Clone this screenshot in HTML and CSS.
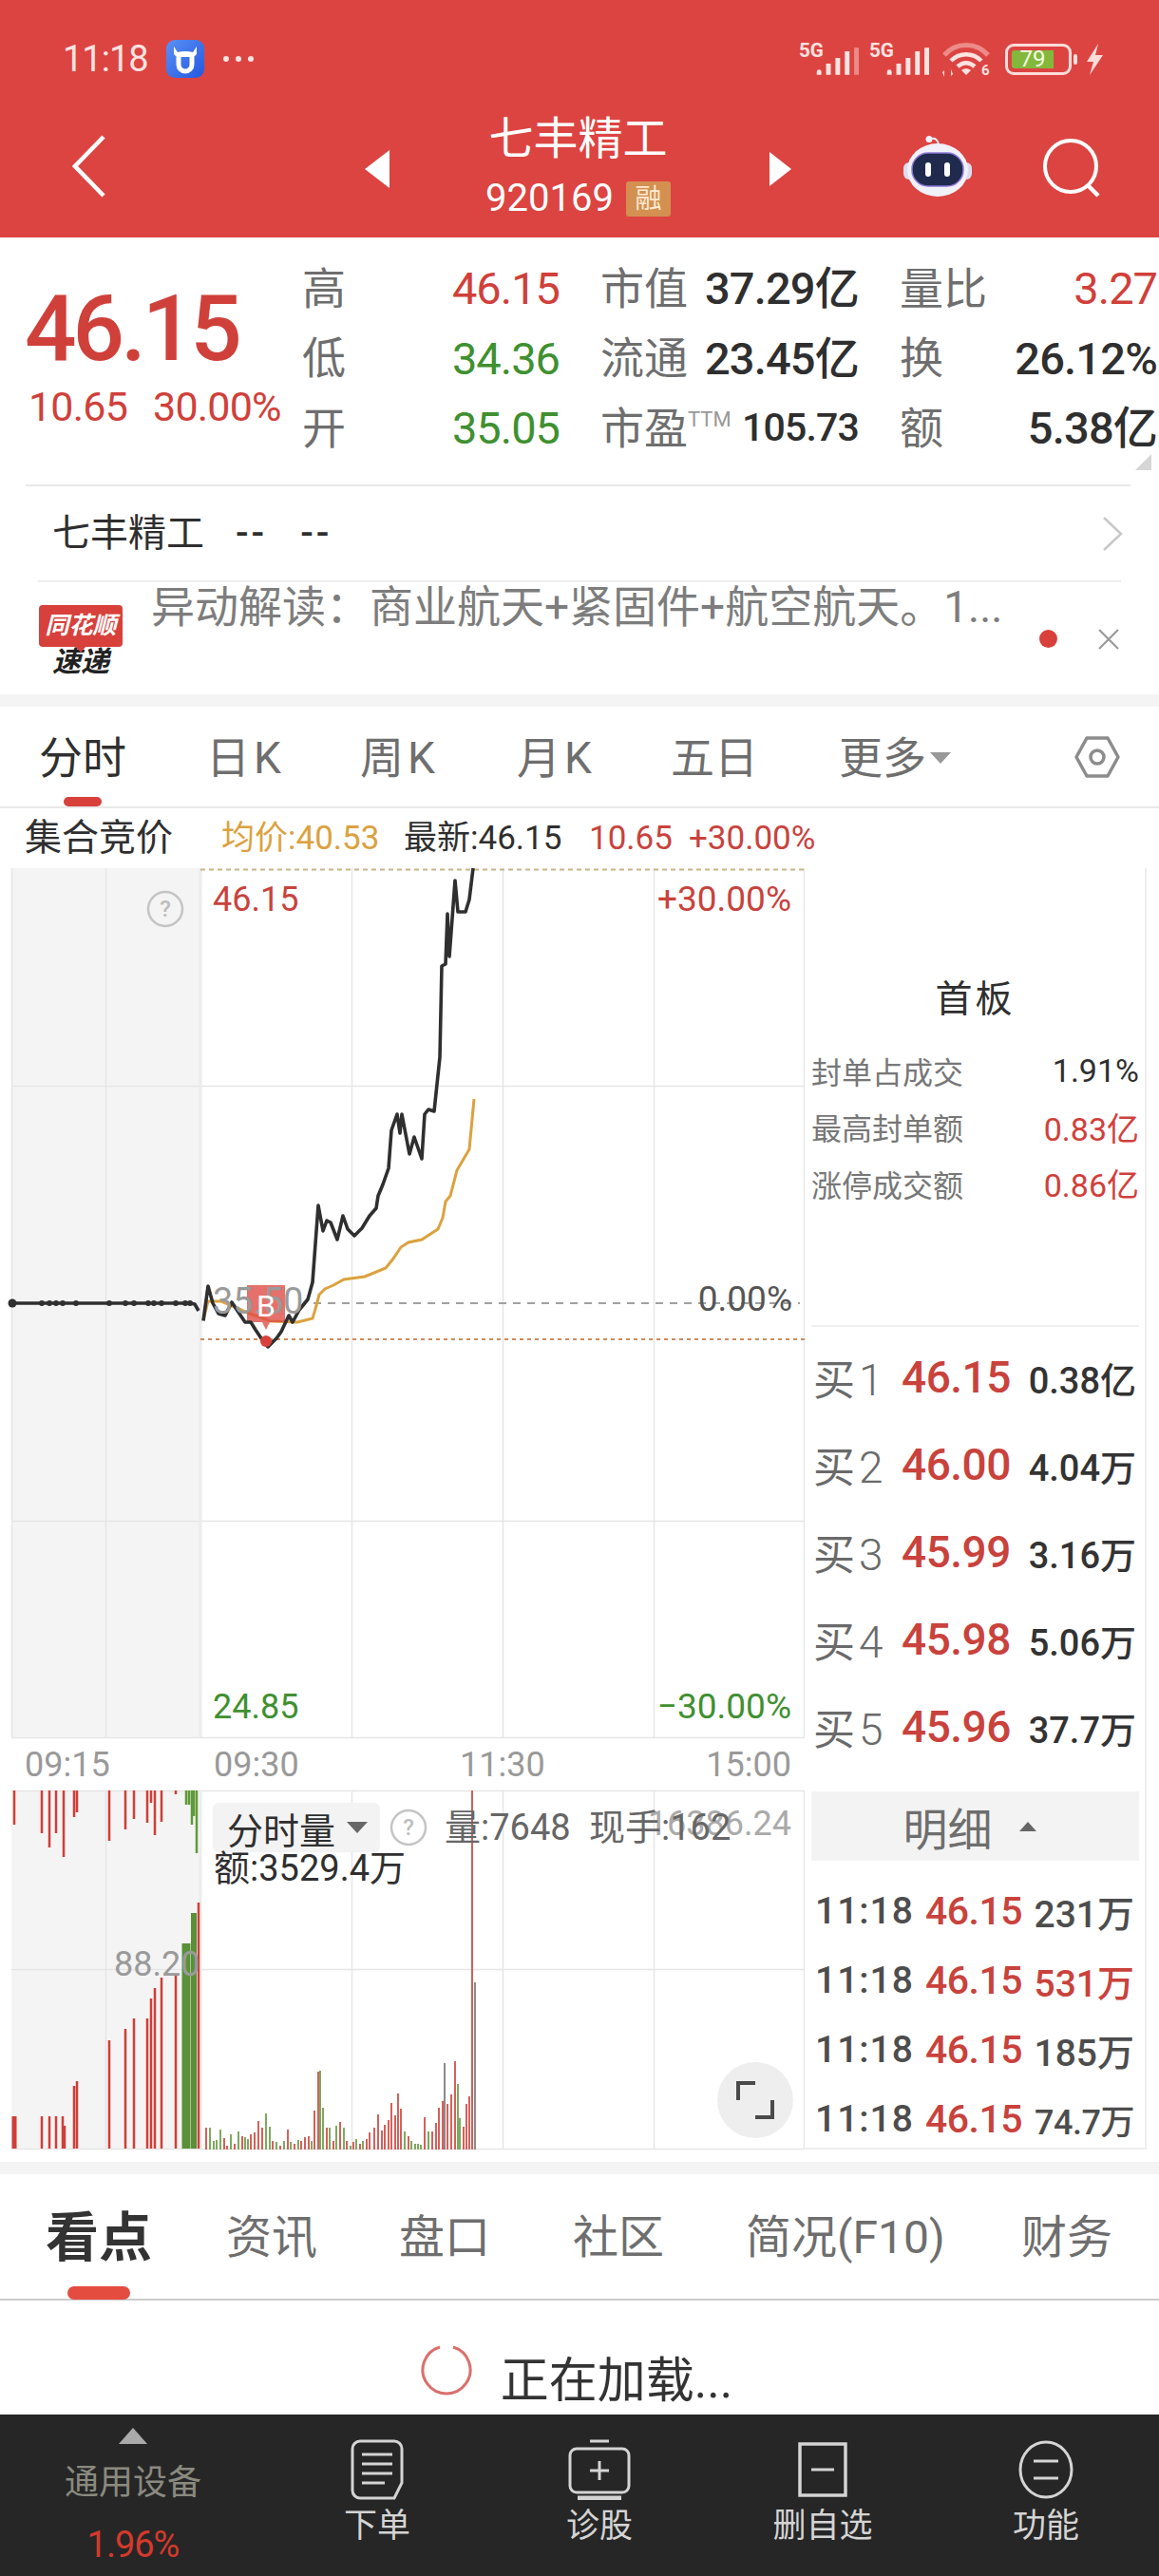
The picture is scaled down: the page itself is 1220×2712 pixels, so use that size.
FILE: index.html
```html
<!DOCTYPE html>
<html lang="zh-CN">
<head>
<meta charset="utf-8">
<title>七丰精工</title>
<link rel="stylesheet" href="styles.css">
</head>
<body>
<div class="page">

  <header class="top">
    <div class="status">
      <span class="clock">11:18</span>
      <svg class="app-icon" viewBox="0 0 40 40">
        <defs><linearGradient id="appBlue" x1="0" y1="0" x2="1" y2="1"><stop offset="0" stop-color="#5a90f5"/><stop offset="1" stop-color="#2458e0"/></linearGradient></defs>
        <rect width="40" height="40" rx="9" fill="url(#appBlue)"/>
        <path d="M8 7l4 6c5-1.500 11-1.500 16 0l4-6 0 8-2 2-3 1h-14l-3-1-2-2z" fill="#fff"/>
        <path d="M13 16v10a7 7 0 0 0 14 0V16" fill="none" stroke="#fff" stroke-width="5"/>
      </svg>
      <span class="more-dots"><i></i><i></i><i></i></span>
      <span class="status-right">
        <svg class="sig" viewBox="0 0 65 36">
          <text x="0" y="16" class="sig-label">5G</text>
          <path d="M19 35v-3a2.500 2.500 0 0 1 5 0v3zM29 35V23h5v12zM39 35V17h5v18zM49 35V10h5v25z" fill="#ffe3e1"/>
          <path d="M59 35V6h5v29z" fill="#ffe3e1" opacity=".45"/>
        </svg>
        <svg class="sig" viewBox="0 0 65 36">
          <text x="0" y="16" class="sig-label">5G</text>
          <path d="M19 35v-3a2.500 2.500 0 0 1 5 0v3zM29 35V23h5v12zM39 35V17h5v18zM49 35V10h5v25zM59 35V6h5v29z" fill="#ffe3e1"/>
        </svg>
        <svg class="wifi" viewBox="0 0 52 38">
          <path d="M2 15C14 1 36 1 48 15" fill="none" stroke="#ffe3e1" stroke-width="5" opacity=".45"/>
          <path d="M9 21c9-9 23-9 32 0M16 27c6-5 12-5 18 0" fill="none" stroke="#ffe3e1" stroke-width="4.500"/>
          <path d="M20 31c3-2.500 7-2.500 10 0l-5 5z" fill="#ffe3e1"/>
          <path d="M2 38v-7l-2 2zM9 30v7l2-2z" fill="#ffe3e1"/>
          <text x="41" y="36" class="wifi-six">6</text>
        </svg>
        <span class="battery"><span class="battery-fill">79</span></span>
        <i class="battery-nub"></i>
        <svg class="bolt" viewBox="0 0 20 33"><path d="M14 0L2 19h7l-4 14L19 12h-8z" fill="#ffdcda"/></svg>
      </span>
    </div>
    <nav class="nav">
      <svg class="back" viewBox="0 0 36 66"><path d="M33 2L3 33l30 31" fill="none" stroke="#fff" stroke-width="4.500"/></svg>
      <i class="tri-left"></i>
      <div class="title">
        <div class="title-name">七丰精工</div>
        <div class="title-code">920169<span class="rong">融</span></div>
      </div>
      <i class="tri-right"></i>
      <svg class="robot" viewBox="0 0 72 64">
        <path d="M37 9c-1-5-4-7-7-6" fill="none" stroke="#eef" stroke-width="2"/>
        <circle cx="27" cy="3.500" r="3.500" fill="#f2f2fa"/>
        <rect x="0" y="28" width="72" height="18" rx="6" fill="#dcdcf0"/>
        <ellipse cx="36" cy="36" rx="32" ry="28" fill="#f1f1fa"/>
        <rect x="9" y="18" width="54" height="35" rx="17" fill="#1f2a4c" stroke="#8a78d8" stroke-width="1.500"/>
        <rect x="23" y="28" width="6" height="15" rx="3" fill="#fff"/>
        <rect x="43" y="28" width="6" height="15" rx="3" fill="#fff"/>
      </svg>
      <svg class="search" viewBox="0 0 62 62"><circle cx="29" cy="29" r="27" fill="none" stroke="#fff" stroke-width="4"/><path d="M47 49l11 11" stroke="#fff" stroke-width="4.500"/></svg>
    </nav>
  </header>

  <section class="quote">
    <div class="price-block">
      <div class="price">46.15</div>
      <div class="change"><span>10.65</span><span>30.00%</span></div>
    </div>
    <div class="stats">
      <div class="stat"><span class="k">高</span><span class="v up">46.15</span></div>
      <div class="stat"><span class="k">市值</span><span class="v strong">37.29亿</span></div>
      <div class="stat"><span class="k">量比</span><span class="v up">3.27</span></div>
      <div class="stat"><span class="k">低</span><span class="v down">34.36</span></div>
      <div class="stat"><span class="k">流通</span><span class="v strong">23.45亿</span></div>
      <div class="stat"><span class="k">换</span><span class="v strong">26.12%</span></div>
      <div class="stat"><span class="k">开</span><span class="v down">35.05</span></div>
      <div class="stat"><span class="k">市盈<sup class="ttm">TTM</sup></span><span class="v strong small">105.73</span></div>
      <div class="stat"><span class="k">额</span><span class="v strong">5.38亿</span></div>
    </div>
    <i class="corner"></i>
  </section>

  <section class="name-row">
    <span class="name-label">七丰精工</span>
    <span class="name-dash">-- --</span>
    <svg class="chev" viewBox="0 0 22 36"><path d="M2 1l18 17L2 35" fill="none" stroke="#c8c8c8" stroke-width="2.500"/></svg>
  </section>

  <section class="news">
    <div class="news-logo">
      <div class="logo-top">同花顺</div>
      <div class="logo-bot">速递</div>
    </div>
    <div class="news-text">异动解读：商业航天+紧固件+航空航天。1...</div>
    <i class="news-dot"></i>
    <svg class="news-close" viewBox="0 0 24 24"><path d="M2 2l20 20M22 2L2 22" stroke="#999" stroke-width="2.200"/></svg>
  </section>

  <div class="band"></div>

  <section class="period-tabs">
    <span class="ptab ptab-on">分时</span>
    <span class="ptab t2">日K</span>
    <span class="ptab t3">周K</span>
    <span class="ptab t4">月K</span>
    <span class="ptab t5">五日</span>
    <span class="ptab t6">更多<i class="caret"></i></span>
    <svg class="hex" viewBox="0 0 48 48"><path d="M13 4h22l11 20-11 20H13L2 24z" fill="none" stroke="#8c8c8c" stroke-width="3.500" stroke-linejoin="round"/><circle cx="24" cy="24" r="7" fill="none" stroke="#8c8c8c" stroke-width="3.500"/></svg>
    <i class="ptab-bar"></i>
  </section>

  <section class="chart-info">
    <span class="ci-title">集合竞价</span>
    <span class="ci-avg">均价:40.53</span>
    <span class="ci-last">最新:46.15</span>
    <span class="ci-chg">10.65</span>
    <span class="ci-pct">+30.00%</span>
  </section>

  <section class="market">
    <div class="canvas">
      <svg class="plot" viewBox="0 914 847 1362">
        <!-- auction band behind both panes -->
        <rect x="12" y="914" width="199" height="915" fill="#f4f4f4"/>
        <rect x="12" y="1885" width="199" height="377" fill="#f4f4f4"/>
        <!-- grid -->
        <path d="M12.500 914V1829M111.500 914V1829M370.500 914V1829M529.500 914V1829M688.500 914V1829M846.500 914V1829M12 1143.500H847M12 1601.500H847M12 1829.500H847M12 1885.500H847M12 2073.500H847M12 2262.500H847M111.500 1885V2262M370.500 1885V2262M529.500 1885V2262M688.500 1885V2262M846.500 1885V2262" fill="none" stroke="#e5e5e5" stroke-width="1.500"/>
        <path d="M211 914V1829M211 1885V2262" stroke="#ececec" stroke-width="3"/>
        <!-- reference levels -->
        <path d="M211 915.500H847" stroke="#c9b48a" stroke-width="2" stroke-dasharray="5 4"/>
        <path d="M330 1372H842" stroke="#a0a0a0" stroke-width="2" stroke-dasharray="8 7"/>
        <path d="M211 1410H847" stroke="#cf8a5c" stroke-width="2" stroke-dasharray="4 4"/>
        <!-- average price -->
        <path d="M214 1390L219 1370L233 1370L247 1376L263 1383L285 1391L313 1392L329 1388L332 1378L336 1363L342 1357L351 1353L362 1347L384 1344L406 1335L414 1325L422 1313L430 1308L444 1305L461 1294L466 1282L469 1265L474 1259L481 1232L494 1210L499 1157" fill="none" stroke="#dba23f" stroke-width="3"/>
        <!-- B marker -->
        <path d="M260 1353H300V1392L284 1392L280 1400L276 1392H260z" fill="#de4d47" fill-opacity=".8"/>
        <!-- price line -->
        <path d="M12 1372H200L205 1373L209 1380M214 1390.600L219 1354L224 1372L230 1383L237 1385L244 1371L252 1383L258 1392L264 1392L269 1400L275 1409L282 1418L291 1409L296 1402L304 1385L308 1392L315 1379L324 1368L329 1350L335 1269L340 1296L344 1285L348 1287L355 1305L361 1280L366 1294L373 1301L381 1293L389 1280L396 1272L398 1259L403 1247L409 1230L412 1190L418 1173L421 1193L423 1173L431 1215L436 1197L444 1220L447 1173L451 1168L457 1170L463 1113L465 1017L469 1015L471 962L473 1007L479 927L482 960L490 960L494 947L498 914" fill="none" stroke="#2f2f2f" stroke-width="3.600" stroke-linejoin="round"/>
        <path d="M44 1372h.01M52 1372h.01M59 1372h.01M66 1372h.01M80 1372h.01M115 1372h.01M132 1372h.01M141 1372h.01M156 1372h.01M162 1372h.01M170 1372h.01M185 1372h.01M195 1372h.01M200 1372h.01" stroke="#2f2f2f" stroke-width="6" stroke-linecap="round"/>
        <circle cx="13" cy="1372" r="4.500" fill="#2f2f2f"/>
        <circle cx="280" cy="1412" r="6" fill="#d8403b"/>
        <!-- auction volume -->
        <path d="M15 1885V1921M44 1885V1930M52 1885V1945M59 1885V1930M67 1885V1955M78 1885V1913M81 1885V1908M115 1885V1938M132 1885V1926M141 1885V1915M155 1885V1919M159 1885V1898M163 1885V1932M170 1885V1918M185 1885V1889M44 2262V2228M52 2262V2228M59 2262V2228M66 2262V2228M68 2262V2238M78 2262V2196M81 2262V2191M115 2262V2148M132 2262V2136M141 2262V2125M155 2262V2125M159 2262V2104M163 2262V2093M170 2262V2082M185 2262V2078M209 2262V2003" stroke="#cf3f38" stroke-width="2.500"/>
        <path d="M15 2262V2228" stroke="#cf3f38" stroke-width="5"/>
        <path d="M196 1885V1900M199 1885V1900M202 1885V1921M204 1885V1912M207 1885V1951" stroke="#5f9a3a" stroke-width="2.500"/>
        <path d="M196 2262V2046" stroke="#5a9038" stroke-width="9"/>
        <path d="M204 2262V2014" stroke="#5a9038" stroke-width="6"/>
        <!-- session volume -->
        <path d="M217 2263v-23M236 2263v-12M239 2263v-4M247 2263v-6M255 2263v-14M264 2263v-16M268 2263v-18M272 2263v-30M276 2263v-23M287 2263v-9M295 2263v-4M303 2263v-21M310 2263v-6M317 2263v-9M321 2263v-13M325 2263v-14M331 2263v-41M335 2263v-82M344 2263v-23M351 2263v-9M358 2263v-29M365 2263v-9M372 2263v-8M379 2263v-6M386 2263v-11M389 2263v-18M394 2263v-23M398 2263v-37M402 2263v-20M405 2263v-26M409 2263v-31M412 2263v-49M416 2263v-36M419 2263v-59M422 2263v-43M430 2263v-14M447 2263v-34M455 2263v-19M459 2263v-28M462 2263v-44M466 2263v-51M471 2263v-48M475 2263v-58M479 2263v-93M488 2263v-24M491 2263v-48M494 2263v-56" stroke="#d0504a" stroke-width="1.800"/>
        <path d="M221 2263v-23M225 2263v-9M228 2263v-10M232 2263v-21M243 2263v-16M251 2263v-19M258 2263v-13M261 2263v-11M280 2263v-38M284 2263v-24M291 2263v-8M299 2263v-9M306 2263v-8M314 2263v-10M328 2263v-9M337 2263v-83M340 2263v-44M347 2263v-23M354 2263v-25M362 2263v-23M369 2263v-4M375 2263v-11M382 2263v-9M426 2263v-19M433 2263v-9M437 2263v-6M440 2263v-6M443 2263v-5M451 2263v-19M482 2263v-69M484 2263v-33" stroke="#70a050" stroke-width="1.800"/>
        <path d="M468 2263v-91M500 2263V2087" stroke="#666" stroke-width="1.500"/>
        <path d="M497 1885V2263" stroke="#c8504a" stroke-width="1.800"/>
      </svg>

      <span class="lb lb-high">46.15</span>
      <span class="lb lb-high-pct">+30.00%</span>
      <span class="lb lb-zero">0.00%</span>
      <span class="lb lb-low">24.85</span>
      <span class="lb lb-low-pct">−30.00%</span>
      <span class="lb lb-open">35.50</span>
      <span class="lb lb-b">B</span>
      <svg class="help help-a" viewBox="0 0 40 40"><circle cx="20" cy="20" r="18" fill="none" stroke="#c4c4c4" stroke-width="2.500"/><text x="20" y="28" class="help-q">?</text></svg>

      <span class="lb t-a">09:15</span>
      <span class="lb t-b">09:30</span>
      <span class="lb t-c">11:30</span>
      <span class="lb t-d">15:00</span>

      <span class="lb lb-vol-top">16386.24</span>
      <span class="lb lb-vol-mid">88.20</span>
      <div class="vol-pill">分时量<i class="caret dark"></i></div>
      <svg class="help help-b" viewBox="0 0 40 40"><circle cx="20" cy="20" r="18" fill="none" stroke="#c4c4c4" stroke-width="2.500"/><text x="20" y="28" class="help-q">?</text></svg>
      <span class="lb lb-vol">量:7648</span>
      <span class="lb lb-hand">现手:162</span>
      <span class="lb lb-amt">额:3529.4万</span>
      <div class="expand">
        <svg viewBox="0 0 42 42"><path d="M3 21V3h18M39 21v18H21" fill="none" stroke="#4a4a4a" stroke-width="4"/></svg>
      </div>
    </div>

    <aside class="side">
      <div class="board">
        <div class="board-title">首板</div>
        <div class="board-row"><span>封单占成交</span><b class="dark-v">1.91%</b></div>
        <div class="board-row"><span>最高封单额</span><b class="up">0.83亿</b></div>
        <div class="board-row"><span>涨停成交额</span><b class="up">0.86亿</b></div>
      </div>
      <div class="book">
        <div class="book-row"><span class="bk">买<em>1</em></span><span class="bp">46.15</span><span class="bv">0.38亿</span></div>
        <div class="book-row"><span class="bk">买<em>2</em></span><span class="bp">46.00</span><span class="bv">4.04万</span></div>
        <div class="book-row"><span class="bk">买<em>3</em></span><span class="bp">45.99</span><span class="bv">3.16万</span></div>
        <div class="book-row"><span class="bk">买<em>4</em></span><span class="bp">45.98</span><span class="bv">5.06万</span></div>
        <div class="book-row"><span class="bk">买<em>5</em></span><span class="bp">45.96</span><span class="bv">37.7万</span></div>
      </div>
      <div class="detail-head">明细<i class="tri-up"></i></div>
      <div class="ticks">
        <div class="tick"><span class="tt">11:18</span><span class="tp">46.15</span><span class="tv">231万</span></div>
        <div class="tick"><span class="tt">11:18</span><span class="tp">46.15</span><span class="tv up">531万</span></div>
        <div class="tick"><span class="tt">11:18</span><span class="tp">46.15</span><span class="tv">185万</span></div>
        <div class="tick"><span class="tt">11:18</span><span class="tp">46.15</span><span class="tv tight">74.7万</span></div>
      </div>
    </aside>
  </section>

  <div class="band"></div>

  <section class="info-tabs">
    <span class="itab itab-on">看点</span>
    <span class="itab">资讯</span>
    <span class="itab">盘口</span>
    <span class="itab">社区</span>
    <span class="itab">简况(F10)</span>
    <span class="itab">财务</span>
    <i class="itab-bar"></i>
  </section>

  <section class="loading">
    <svg class="spinner" viewBox="0 0 56 56"><path d="M36 4A25 25 0 1 1 22 4" fill="none" stroke="#d9706c" stroke-width="3"/></svg>
    <span>正在加载...</span>
  </section>

  <footer class="dock">
    <div class="sector">
      <i class="sector-tri"></i>
      <div class="sector-name">通用设备</div>
      <div class="sector-pct">1.96%</div>
    </div>
    <div class="dock-item">
      <svg viewBox="0 0 56 64"><path d="M10 2h36a8 8 0 0 1 8 8v36l-8 16H10a8 8 0 0 1-8-8V10a8 8 0 0 1 8-8z" fill="none" stroke="#d4d4d4" stroke-width="3"/><path d="M12 16h32M12 26h32M12 36h32M12 46h24" stroke="#d4d4d4" stroke-width="3"/></svg>
      <span>下单</span>
    </div>
    <div class="dock-item">
      <svg viewBox="0 0 66 64"><path d="M23 2h20" stroke="#d4d4d4" stroke-width="3"/><rect x="2" y="10" width="62" height="46" rx="7" fill="none" stroke="#d4d4d4" stroke-width="3"/><path d="M33 23v20M23 33h20" stroke="#d4d4d4" stroke-width="3"/><path d="M10 62h46" stroke="#d4d4d4" stroke-width="5"/></svg>
      <span>诊股</span>
    </div>
    <div class="dock-item">
      <svg viewBox="0 0 56 64"><rect x="4" y="5" width="48" height="54" fill="none" stroke="#d4d4d4" stroke-width="3.500"/><path d="M16 32h24" stroke="#d4d4d4" stroke-width="3"/></svg>
      <span>删自选</span>
    </div>
    <div class="dock-item">
      <svg viewBox="0 0 60 64"><ellipse cx="30" cy="32" rx="27" ry="29" fill="none" stroke="#d4d4d4" stroke-width="3"/><path d="M17 23h26M17 41h26" stroke="#d4d4d4" stroke-width="3"/></svg>
      <span>功能</span>
    </div>
  </footer>
</div>
</body>
</html>
```
FILE: styles.css
```css
* { box-sizing: border-box; }
html, body { margin: 0; padding: 0; background: #fff; }
body { font-family: Roboto, "Noto Sans CJK SC", sans-serif; color: #2f2f2f; }
i, em { font-style: normal; }

.page { width: 1220px; height: 2712px; overflow: hidden; display: flex; flex-direction: column; }
.up { color: #d0403a; }
.down { color: #3f9030; }

/* header */
.top { height: 250px; background: #dc4441; color: #fff; display: flex; flex-direction: column; }
.status { height: 124px; display: flex; align-items: center; padding: 0 58px 0 66px; color: #ffe3e1; }
.clock { font-size: 38px; line-height: 1; width: 109px; letter-spacing: -1px; }
.app-icon { width: 40px; height: 40px; flex: none; }
.more-dots { display: flex; gap: 7px; margin-left: 20px; }
.more-dots i { width: 6px; height: 6px; border-radius: 50%; background: #ffe3e1; }
.status-right { margin-left: auto; display: flex; align-items: center; }
.sig { width: 64px; height: 36px; margin-right: 10px; overflow: visible; }
.sig-label { font: 700 21px Roboto, sans-serif; fill: #ffe3e1; }
.wifi { width: 52px; height: 38px; margin-left: 3px; overflow: visible; }
.wifi-six { font: 700 15px Roboto, sans-serif; fill: #ffe3e1; }
.battery { width: 70px; height: 33px; margin-left: 14px; border: 3px solid #ffdcda; border-radius: 9px; padding: 4px; display: flex; }
.battery-fill { width: 44px; background: #84b83c; color: #f2ffe0; font-size: 24px; line-height: 19px; text-align: center; border-radius: 3px 0 0 3px; }
.battery-nub { width: 4px; height: 11px; margin-left: 2px; background: #ffdcda; border-radius: 2px; }
.bolt { width: 20px; height: 33px; margin-left: 8px; }

.nav { flex: 1; position: relative; display: flex; align-items: flex-start; }
.back { width: 36px; height: 66px; margin: 18px 0 0 76px; flex: none; }
.tri-left { margin: 34px 0 0 272px; border: solid transparent; border-width: 20px 26px 20px 0; border-right-color: #fff; }
.title { width: 400px; text-align: center; }
.title-name { font-size: 47px; line-height: 56px; margin-top: -6px; padding-right: 3px; }
.title-code { display: flex; justify-content: center; align-items: center; font-size: 40px; line-height: 50px; margin-top: 10px; padding-right: 3px; }
.rong { width: 47px; height: 37px; margin-left: 13px; background: #d49050; color: #fbe9d3; font-size: 28px; line-height: 37px; border-radius: 3px; }
.tri-right { margin: 36px 0 0 0; border: solid transparent; border-width: 18px 0 18px 23px; border-left-color: #fff; }
.robot { width: 72px; height: 64px; margin: 19px 0 0 118px; flex: none; }
.search { width: 62px; height: 62px; margin: 22px 0 0 75px; flex: none; }

/* quote */
.quote { height: 260px; display: flex; position: relative; }
.price-block { width: 318px; padding-left: 26px; flex: none; }
.price { font-size: 96px; font-weight: 500; color: #d0403a; line-height: 92px; margin-top: 50px; letter-spacing: -4px; }
.change { display: flex; gap: 27px; font-size: 43px; line-height: 48px; color: #d0403a; margin-top: 12px; margin-left: 4px; letter-spacing: -.8px; white-space: nowrap; }
.stats { flex: 1; display: grid; grid-template-columns: 271px 272px 271px; column-gap: 43px; grid-auto-rows: 73.500px; padding-top: 17px; }
.stat { display: flex; justify-content: space-between; align-items: center; }
.k { font-size: 46px; color: #6e6e6e; line-height: 1; white-space: nowrap; }
.v { font-size: 47px; line-height: 1; white-space: nowrap; letter-spacing: -1px; }
.v.strong { font-weight: 500; color: #2f2f2f; letter-spacing: -.8px; }
.v.small { font-size: 41px; }
.ttm { font-size: 22px; vertical-align: 18px; line-height: 0; color: #999; }
.corner { position: absolute; right: 8px; top: 228px; border: solid transparent; border-width: 0 0 17px 17px; border-bottom-color: #d6d6d6; }

.name-row { height: 101px; margin: 0 30px 0 27px; border-top: 2px solid #e9e9e9; display: flex; align-items: center; padding-left: 28px; }
.name-label { font-size: 40px; line-height: 1; }
.name-dash { font-size: 40px; line-height: 1; margin-left: 33px; font-weight: 500; word-spacing: 22px; letter-spacing: 3px; }
.chev { width: 22px; height: 36px; margin-left: auto; margin-right: 8px; }

.news { height: 120px; position: relative; margin: 0 40px; border-top: 2px solid #eeeeee; }
.news-logo { position: absolute; left: 1px; top: 24px; width: 88px; text-align: center; font-weight: 700; font-style: italic; }
.logo-top { height: 44px; background: #d8403b; color: #fff; font-size: 25px; line-height: 44px; border-radius: 4px; white-space: nowrap; position: relative; }
.logo-top::after { content: ""; position: absolute; left: 38px; top: 43px; border: solid transparent; border-width: 7px 6px 0; border-top-color: #d8403b; }
.logo-bot { font-size: 30px; line-height: 32px; color: #222; }
.news-text { position: absolute; left: 119px; top: 0; width: 950px; font-size: 46px; line-height: 52px; color: #7d7d7d; white-space: nowrap; }
.news-dot { position: absolute; left: 1054px; top: 50px; width: 19px; height: 19px; border-radius: 50%; background: #d8403b; }
.news-close { position: absolute; left: 1115px; top: 48px; width: 24px; height: 24px; }

.band { height: 13px; background: #f4f4f4; flex: none; }

/* period tabs */
.period-tabs { height: 107px; border-bottom: 2px solid #e9e9e9; position: relative; display: flex; align-items: center; }
.ptab { font-size: 46px; line-height: 1; color: #6e6e6e; position: absolute; top: 31px; white-space: nowrap; }
.ptab-on { left: 41px; color: #2f2f2f; }
.t2 { left: 217px; letter-spacing: 4px; }
.t3 { left: 379px; letter-spacing: 4px; }
.t4 { left: 544px; letter-spacing: 4px; }
.t5 { left: 706px; }
.t6 { left: 883px; display: flex; align-items: center; }
.caret { width: 0; height: 0; margin-left: 4px; border: solid transparent; border-width: 12px 11px 0; border-top-color: #999; }
.caret.dark { border-top-color: #666; margin-left: 12px; }
.hex { position: absolute; left: 1131px; top: 29px; width: 48px; height: 48px; }
.ptab-bar { position: absolute; left: 67px; bottom: 0; width: 40px; height: 10px; border-radius: 5px; background: #d8403b; }

.chart-info { height: 63px; display: flex; align-items: center; font-size: 35px; line-height: 1; position: relative; }
.chart-info span { position: absolute; white-space: nowrap; }
.ci-title { left: 26px; font-size: 39px; }
.ci-avg { left: 233px; color: #dba23f; }
.ci-last { left: 425px; }
.ci-chg { left: 620px; color: #c9423c; }
.ci-pct { left: 725px; color: #c9423c; }

/* chart and side panel */
.market { height: 1362px; display: flex; flex: none; }
.canvas { width: 847px; height: 1362px; position: relative; flex: none; }
.plot { position: absolute; left: 0; top: 0; width: 847px; height: 1362px; }
.lb { position: absolute; font-size: 36px; line-height: 40px; white-space: nowrap; }
.lb-high { left: 224px; top: 13px; color: #c9423c; }
.lb-high-pct { right: 14px; top: 13px; color: #c9423c; font-size: 37px; }
.lb-zero { right: 13px; top: 434px; color: #555; font-size: 37px; }
.lb-low { left: 224px; top: 863px; color: #3f9030; }
.lb-low-pct { right: 14px; top: 863px; color: #3f9030; font-size: 37px; }
.lb-open { left: 224px; top: 436px; color: #9a9a9a; font-size: 38px; }
.lb-b { left: 270px; top: 441px; color: #fff; font-size: 32px; }
.help { position: absolute; width: 40px; height: 40px; }
.help-a { left: 154px; top: 23px; }
.help-b { left: 410px; top: 990px; }
.help-q { font: 500 24px Roboto, sans-serif; fill: #bdbdbd; text-anchor: middle; }
.t-a { left: 26px; top: 924px; color: #999; }
.t-b { left: 225px; top: 924px; color: #999; }
.t-c { left: 484px; top: 924px; color: #999; }
.t-d { right: 14px; top: 924px; color: #999; }
.lb-vol-top { right: 14px; top: 986px; color: #aaa; }
.lb-vol-mid { left: 120px; top: 1134px; color: #9a9a9a; }
.vol-pill { position: absolute; left: 224px; top: 984px; width: 176px; height: 52px; padding-left: 15px; background: #f3f3f3; border-radius: 6px; display: flex; align-items: center; font-size: 38px; }
.lb-vol { left: 468px; top: 990px; color: #666; font-size: 38px; }
.lb-hand { left: 620px; top: 990px; color: #666; font-size: 38px; }
.lb-amt { left: 225px; top: 1033px; font-size: 38px; }
.expand { position: absolute; left: 755px; top: 1257px; width: 80px; height: 80px; border-radius: 50%; background: #eeeeee; display: flex; align-items: center; justify-content: center; }
.expand svg { width: 42px; height: 42px; }

.side { width: 360px; height: 1349px; flex: none; border-right: 2px solid #eeeeee; border-bottom: 2px solid #eeeeee; padding: 0 6px 0 7px; display: flex; flex-direction: column; }
.board { height: 483px; flex: none; padding-top: 114px; border-bottom: 2px solid #f0f0f0; }
.board-title { font-size: 39px; line-height: 48px; text-align: center; letter-spacing: 3px; margin-bottom: 21px; }
.board-row { height: 59.500px; display: flex; justify-content: space-between; align-items: center; font-size: 32px; color: #777; }
.board-row b { font-weight: 400; font-size: 34px; }
.board-row .dark-v { color: #2f2f2f; }
.book { height: 489px; flex: none; padding-top: 7px; }
.book-row { height: 92px; display: flex; align-items: center; padding: 0 3px 0 2px; }
.bk { width: 93px; font-size: 44px; color: #6a6a6a; flex: none; }
.bk em { margin-left: 4px; font-size: 46px; font-weight: 300; }
.bp { font-size: 46px; font-weight: 500; color: #c9423c; letter-spacing: -.5px; }
.bv { margin-left: auto; font-size: 38px; font-weight: 500; color: #333; }
.detail-head { height: 73px; background: #f3f3f3; display: flex; align-items: center; justify-content: center; gap: 28px; font-size: 47px; color: #6e6e6e; padding-right: 12px; flex: none; }
.tri-up { border: solid transparent; border-width: 0 9px 10px; border-bottom-color: #666; }
.ticks { height: 302px; flex: none; padding-top: 16px; }
.tick { height: 73px; display: flex; align-items: center; font-size: 39px; padding: 0 5px 0 4px; white-space: nowrap; }
.tt { color: #4d4d4d; width: 116px; letter-spacing: 1px; font-weight: 500; }
.tp { color: #c9423c; font-weight: 500; font-size: 41px; letter-spacing: -.5px; }
.tv { margin-left: auto; color: #4d4d4d; font-weight: 500; }
.tv.up { color: #c9423c; }
.tv.tight { font-size: 36px; letter-spacing: -.5px; }

/* info tabs */
.info-tabs { height: 133px; border-bottom: 2px solid #cccccc; position: relative; flex: none; }
.itab { position: absolute; top: 43px; font-size: 48px; line-height: 1; color: #6e6e6e; white-space: nowrap; }
.itab:nth-child(2) { left: 238px; }
.itab:nth-child(3) { left: 420px; }
.itab:nth-child(4) { left: 603px; }
.itab:nth-child(5) { left: 785px; }
.itab:nth-child(6) { left: 1075px; }
.itab-on { left: 48px; top: 39px; font-size: 56px; font-weight: 700; color: #333; }
.itab-bar { position: absolute; left: 71px; bottom: -1px; width: 66px; height: 14px; border-radius: 7px; background: #e54c40; }

.loading { height: 120px; display: flex; align-items: center; justify-content: center; gap: 30px; font-size: 51px; color: #333; padding-top: 40px; padding-right: 8px; }
.spinner { width: 56px; height: 56px; margin-top: -14px; }

/* dock */
.dock { height: 170px; background: #262626; color: #d4d4d4; position: relative; flex: none; }
.sector { position: absolute; left: 40px; top: 0; width: 200px; text-align: center; }
.sector-tri { display: block; width: 0; margin: 14px auto 0; border: solid transparent; border-width: 0 15px 17px; border-bottom-color: #aaaaaa; }
.sector-name { font-size: 36px; line-height: 44px; color: #8a8a80; margin-top: 19px; }
.sector-pct { font-size: 38px; line-height: 44px; color: #d43a2c; margin-top: 21px; letter-spacing: -1px; }
.dock-item { position: absolute; top: 26px; width: 120px; display: flex; flex-direction: column; align-items: center; font-size: 35px; line-height: 40px; white-space: nowrap; }
.dock-item svg { height: 64px; width: 66px; margin-bottom: 8px; }
.dock-item:nth-child(2) { left: 337px; }
.dock-item:nth-child(3) { left: 571px; }
.dock-item:nth-child(4) { left: 806px; }
.dock-item:nth-child(5) { left: 1041px; }
```
